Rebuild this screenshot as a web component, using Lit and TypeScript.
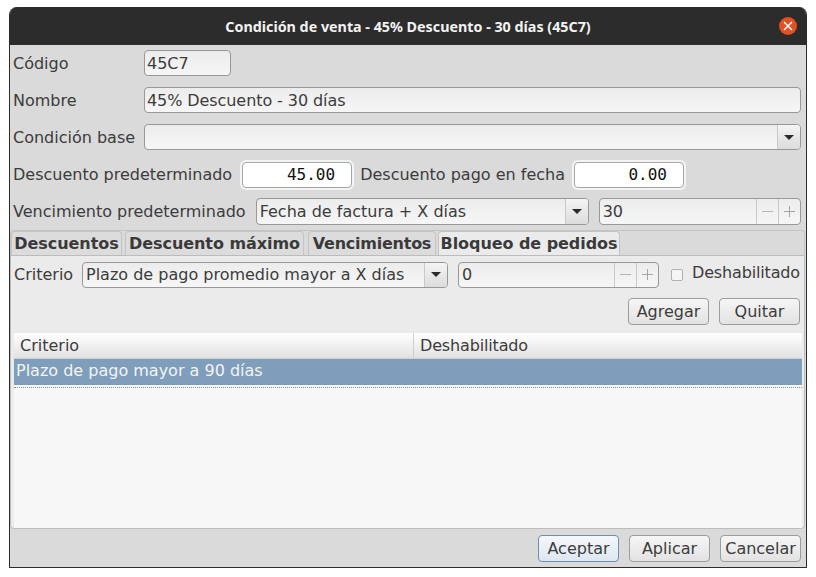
import { LitElement, html, css } from "lit";
import { customElement } from "lit/decorators.js";

@customElement("app-root")
export class AppRoot extends LitElement {
  static styles = css`
    :host { display: block; width: 816px; height: 577px; background: #fff; font-family: "DejaVu Sans", sans-serif; font-size: 16px; color: #3c3c3c; overflow: hidden; }
    * { box-sizing: border-box; }
    .win { margin: 7px 0 0 9px; width: 798px; height: 561px; display: flex; flex-direction: column; border-radius: 8px 8px 0 0; overflow: hidden; background: #dadada; border: solid #2c2c2c; border-width: 0 1px 1px 1px; }
    .title { height: 38px; flex: none; margin: 0 -1px; background: #2c2c2c; color: #f2f2f2; font: bold 14.3px "Noto Sans", sans-serif; display: flex; align-items: center; justify-content: center; position: relative; }
    .close { position: absolute; right: 10px; top: 10px; width: 18px; height: 18px; border-radius: 50%; background: #e2511f; display: flex; align-items: center; justify-content: center; }
    .body { flex: 1; display: flex; flex-direction: column; padding: 5px 1px 5px 0; min-height: 0; }
    .row { display: flex; align-items: center; margin-right: 4px; }
    .lbl { padding-left: 3px; white-space: nowrap; }
    .field { height: 26px; border: 1px solid #989898; border-radius: 4px; background: linear-gradient(#ececec, #f6f6f6); padding-left: 2px; display: flex; align-items: center; white-space: nowrap; }
    .tight { letter-spacing: -0.08px; }
    .r1 { height: 26px; }
    .r2 { height: 26px; margin-top: 11px; }
    .r3 { height: 26px; margin-top: 11px; }
    .r4 { height: 26px; margin-top: 12px; }
    .r4 .lbl { padding-bottom: 2px; }
    .r5 { height: 27px; margin-top: 10px; }
    .cl { width: 134px; flex: none; }
    .f1 { width: 87px; }
    .grow { flex: 1; }
    .combo { padding: 0 0 0 3px; justify-content: space-between; }
    .arrow { width: 23px; height: 100%; flex: none; border-left: 1px solid #c9c9c9; background: linear-gradient(#f4f4f4, #dcdcdc); border-radius: 0 3px 3px 0; display: flex; align-items: center; justify-content: center; }
    .arrow i { width: 0; height: 0; border-left: 5px solid transparent; border-right: 5px solid transparent; border-top: 5px solid #2c2c2c; }
    .num { height: 26px; width: 110px; border: 1px solid #a6a6a6; box-shadow: 0 0 0 2px #f4f4f4; border-radius: 4px; background: #fff; color: #111; font-family: "DejaVu Sans Mono", monospace; font-size: 16px; display: flex; align-items: center; justify-content: flex-end; padding: 0 16px 2px 0; }
    .num-a { margin-left: 10px; }
    .num-b { margin-left: 9px; }
    .desc2 { margin-left: 5px; }
    .due { width: 333px; height: 27px; margin-left: 10px; }
    .due2 { height: 27px; margin-left: 10px; }
    .spin { padding: 0 0 0 3px; justify-content: space-between; }
    .sb { width: 22px; height: 100%; border-left: 1px solid #c9c9c9; display: flex; align-items: center; justify-content: center; flex: none; }
    .sbs { display: flex; height: 100%; flex: none; }
    .tabs { height: 25px; margin-top: 5px; flex: none; display: flex; align-items: flex-end; background: #dadada; border: 1px solid #c4c4c4; border-bottom: none; border-radius: 4px 4px 0 0; }
    .tab { height: 24px; border: 1px solid #c4c4c4; border-bottom: none; border-radius: 4px 4px 0 0; font-weight: bold; color: #3a3a3a; display: flex; align-items: center; justify-content: center; background: #dcdcdc; white-space: nowrap; letter-spacing: -0.06px; }
    .tab.on { background: #ebebeb; }
    .t1 { width: 111px; }
    .t2 { width: 179px; margin-left: 3px; }
    .t3 { width: 128px; margin-left: 4px; letter-spacing: -0.25px; }
    .t4 { width: 182px; margin-left: 2px; }
    .pane { flex: 1; min-height: 0; background: #ebebeb; border: 1px solid #bcbcbc; border-radius: 0 0 4px 4px; display: flex; flex-direction: column; padding: 5px 2px 0 3px; }
    .crit { height: 27px; margin-right: 0; }
    .crit .lbl { padding-left: 0; width: 68px; flex: none; }
    .f-a { width: 366px; }
    .f-b { width: 201px; margin-left: 10px; }
    .check { width: 12px; height: 12px; border: 1px solid #b0b0b0; border-radius: 2px; background: #f5f5f5; margin-left: 12px; flex: none; }
    .chk-l { margin-left: 9px; transform: translateY(-2px); white-space: nowrap; letter-spacing: -0.15px; }
    .btns { display: flex; justify-content: flex-end; gap: 10px; margin-top: 10px; padding-right: 2px; flex: none; }
    .btn { height: 27px; width: 81px; border: 1px solid #9c9c9c; border-radius: 4px; background: linear-gradient(#f6f6f6, #e2e2e2); display: flex; align-items: center; justify-content: center; flex: none; }
    .btn.def { border-color: #6f8fb0; background: linear-gradient(#f6f8fb, #dde6f0); }
    .table { flex: 1; margin-top: 8px; background: #f7f7f7; min-height: 0; }
    .thead { height: 26px; display: flex; background: linear-gradient(#fff, #e2e2e2); border-bottom: 1px solid #d0d0d0; }
    .th { display: flex; align-items: center; padding-left: 6px; color: #3c3c3c; letter-spacing: -0.15px; }
    .th1 { width: 400px; border-right: 1px solid #d0d0d0; letter-spacing: 0; }
    .sel { height: 26px; background: #7e9ebc; color: #f4f4f4; display: flex; align-items: center; padding: 0 0 4px 2px; }
    .dots { height: 1px; margin-top: 2px; border-top: 1px dotted #8a8a8a; }
    .foot { flex: none; display: flex; justify-content: flex-end; gap: 10px; margin-top: 6px; padding-right: 4px; }
  `;

  private minus() {
    return html`<svg width="11" height="11" viewBox="0 0 11 11"><path d="M0 5.5h11" stroke="#b5b5b5" fill="none"/></svg>`;
  }
  private plus() {
    return html`<svg width="11" height="11" viewBox="0 0 11 11"><path d="M0 5.5h11M5.5 0v11" stroke="#a5a5a5" fill="none"/></svg>`;
  }

  render() {
    const arrow = html`<div class="arrow"><i></i></div>`;
    const sbs = html`<div class="sbs"><div class="sb">${this.minus()}</div><div class="sb">${this.plus()}</div></div>`;
    return html`
      <div class="win">
        <div class="title">Condición de venta - 45% Descuento - 30 días (45C7)
          <div class="close"><svg width="10" height="10" viewBox="0 0 10 10"><path d="M1 1l8 8M9 1l-8 8" stroke="#fff" stroke-width="1.5" fill="none"/></svg></div>
        </div>
        <div class="body">
          <div class="row r1"><div class="lbl cl">Código</div><div class="field f1">45C7</div></div>
          <div class="row r2"><div class="lbl cl">Nombre</div><div class="field grow tight">45% Descuento - 30 días</div></div>
          <div class="row r3"><div class="lbl cl">Condición base</div><div class="field grow combo"><span></span>${arrow}</div></div>
          <div class="row r4"><div class="lbl">Descuento predeterminado</div><div class="num num-a">45.00</div><div class="lbl desc2">Descuento pago en fecha</div><div class="num num-b">0.00</div></div>
          <div class="row r5"><div class="lbl">Vencimiento predeterminado</div><div class="field combo due">Fecha de factura + X días${arrow}</div><div class="field spin grow due2">30${sbs}</div></div>
          <div class="tabs">
            <div class="tab t1">Descuentos</div><div class="tab t2">Descuento máximo</div><div class="tab t3">Vencimientos</div><div class="tab t4 on">Bloqueo de pedidos</div>
          </div>
          <div class="pane">
            <div class="row crit"><div class="lbl">Criterio</div><div class="field combo f-a">Plazo de pago promedio mayor a X días${arrow}</div><div class="field spin f-b">0${sbs}</div><div class="check"></div><div class="chk-l">Deshabilitado</div></div>
            <div class="btns"><div class="btn">Agregar</div><div class="btn">Quitar</div></div>
            <div class="table">
              <div class="thead"><div class="th th1">Criterio</div><div class="th">Deshabilitado</div></div>
              <div class="sel">Plazo de pago mayor a 90 días</div>
              <div class="dots"></div>
            </div>
          </div>
          <div class="foot"><div class="btn def">Aceptar</div><div class="btn">Aplicar</div><div class="btn">Cancelar</div></div>
        </div>
      </div>
    `;
  }
}
